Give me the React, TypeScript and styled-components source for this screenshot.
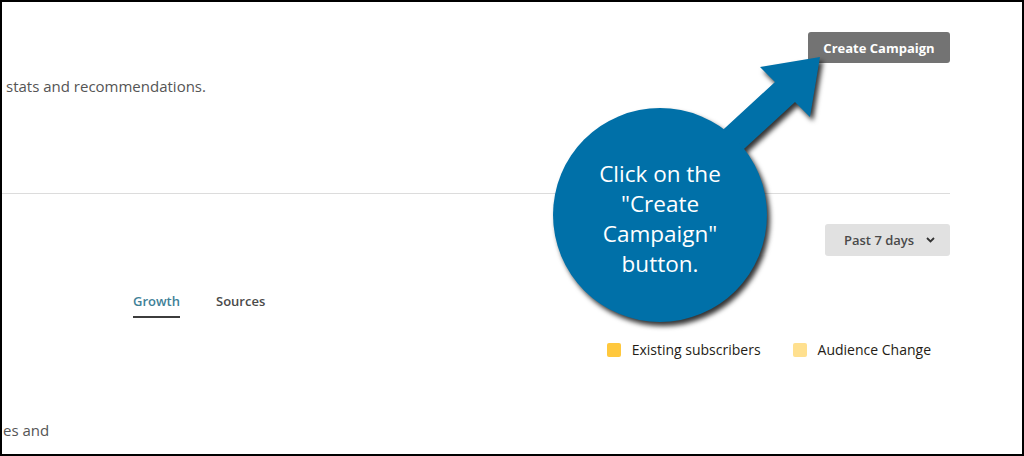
import React from 'react';
import styled, { createGlobalStyle } from 'styled-components';

const GlobalStyle = createGlobalStyle`
  html, body {
    margin: 0;
    padding: 0;
    background: #fff;
  }
  body {
    font-family: 'Open Sans', 'Liberation Sans', sans-serif;
  }
`;

const LEGEND = [
    { label: 'Existing subscribers', color: '#ffc83d' },
    { label: 'Audience Change', color: '#ffe08f' },
];

const TABS = [
    { label: 'Growth', active: true },
    { label: 'Sources', active: false },
];

const Frame = styled.div`
    position: relative;
    box-sizing: border-box;
    width: 1024px;
    height: 456px;
    border: 2px solid #000;
    overflow: hidden;
    background: #fff;
`;

const Content = styled.div`
    width: 948px;
    display: flex;
    flex-direction: column;
    padding-top: 30px;
`;

const ButtonRow = styled.div`
    display: flex;
    justify-content: flex-end;
`;

const CreateButton = styled.button`
    height: 31px;
    width: 142px;
    padding: 0;
    border: none;
    border-radius: 3px;
    background: #737373;
    color: #fff;
    font-family: inherit;
    font-size: 13px;
    font-weight: 700;
`;

const Intro = styled.p`
    margin: 11px 0 0;
    padding-left: 4px;
    font-size: 15px;
    line-height: 24px;
    color: #555;
`;

const Divider = styled.hr`
    margin: 95px 0 0;
    border: none;
    height: 1px;
    background: #dcdcdc;
`;

const FilterRow = styled.div`
    display: flex;
    justify-content: flex-end;
    margin-top: 30px;
`;

const Dropdown = styled.div`
    box-sizing: border-box;
    display: flex;
    align-items: center;
    gap: 12px;
    width: 125px;
    height: 32px;
    padding: 0 0 0 19px;
    border-radius: 3px;
    background: #e1e1e1;
    color: #4a4a4a;
    font-size: 13px;
    font-weight: 600;
`;

const Tabs = styled.div`
    display: flex;
    gap: 36px;
    margin-top: 35px;
    padding-left: 131px;
`;

const Tab = styled.div<{ $active?: boolean }>`
    padding-bottom: 5px;
    line-height: 20px;
    font-size: 13px;
    font-weight: 600;
    color: ${(p) => (p.$active ? '#3f8198' : '#4a4a4a')};
    border-bottom: 2px solid ${(p) => (p.$active ? '#3c3c3c' : 'transparent')};
`;

const Legend = styled.div`
    display: flex;
    justify-content: flex-end;
    gap: 32px;
    margin-top: 22px;
    padding-right: 19px;
`;

const LegendItem = styled.div`
    display: flex;
    align-items: center;
    gap: 11px;
    font-size: 14px;
    line-height: 20px;
    color: #241c15;
`;

const Swatch = styled.span<{ $color: string }>`
    width: 14px;
    height: 14px;
    border-radius: 2px;
    background: ${(p) => p.$color};
`;

const Footnote = styled.p`
    margin: 58px 0 0;
    padding-left: 1px;
    font-size: 15px;
    line-height: 24px;
    color: #555;
`;

/* annotation laid over the page */
const Callout = styled.div`
    position: absolute;
    left: 538px;
    top: 38px;
    width: 300px;
    height: 300px;
    pointer-events: none;

    svg {
        display: block;
        filter: drop-shadow(3px 4px 2.5px rgba(0, 0, 0, 0.8));
    }
`;

const CalloutText = styled.div`
    position: absolute;
    left: 13px;
    top: 72px;
    width: 214px;
    height: 214px;
    display: flex;
    align-items: center;
    justify-content: center;
    text-align: center;
    color: #fff;
    font-size: 22.5px;
    line-height: 30px;
`;

const Chevron = () => (
    <svg width="9" height="6" viewBox="0 0 9 6">
        <path d="M1 1 L4.5 4.5 L8 1" fill="none" stroke="#333" strokeWidth="1.8" />
    </svg>
);

const App = () => {
    return (
        <Frame>
            <GlobalStyle />
            <Content>
                <ButtonRow>
                    <CreateButton>Create Campaign</CreateButton>
                </ButtonRow>
                <Intro>stats and recommendations.</Intro>
                <Divider />
                <FilterRow>
                    <Dropdown>
                        Past 7 days
                        <Chevron />
                    </Dropdown>
                </FilterRow>
                <Tabs>
                    {TABS.map((t) => (
                        <Tab key={t.label} $active={t.active}>
                            {t.label}
                        </Tab>
                    ))}
                </Tabs>
                <Legend>
                    {LEGEND.map((item) => (
                        <LegendItem key={item.label}>
                            <Swatch $color={item.color} />
                            {item.label}
                        </LegendItem>
                    ))}
                </Legend>
                <Footnote>es and</Footnote>
            </Content>

            <Callout>
                <svg width="300" height="300" viewBox="540 40 300 300">
                    <path
                        d="M700 151 L775 82 L760 67 L820 57 L810 117 L795 102 L720 171 Z"
                        fill="#0070a8"
                    />
                    <circle cx="660" cy="215" r="107" fill="#0070a8" />
                </svg>
                <CalloutText>
                    Click on the
                    <br />
                    "Create
                    <br />
                    Campaign"
                    <br />
                    button.
                </CalloutText>
            </Callout>
        </Frame>
    );
};

export default App;
